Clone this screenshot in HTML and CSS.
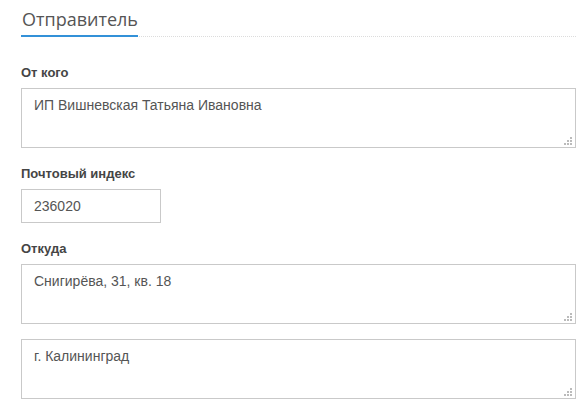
FILE: index.html
```html
<!DOCTYPE html>
<html lang="ru">
<head>
<meta charset="utf-8">
<title>Отправитель</title>
<link rel="stylesheet" href="styles.css">
</head>
<body>
<div class="page">
  <div class="section-head"><h2 class="section-title">Отправитель</h2></div>

  <div class="field first">
    <label class="label">От кого</label>
    <div class="area-wrap">
      <textarea class="area">ИП Вишневская Татьяна Ивановна</textarea>
      <span class="grip"></span>
    </div>
  </div>

  <div class="field">
    <label class="label">Почтовый индекс</label>
    <input class="input" type="text" value="236020">
  </div>

  <div class="field">
    <label class="label">Откуда</label>
    <div class="area-wrap">
      <textarea class="area">Снигирёва, 31, кв. 18</textarea>
      <span class="grip"></span>
    </div>
    <div class="area-wrap next">
      <textarea class="area">г. Калининград</textarea>
      <span class="grip"></span>
    </div>
  </div>
</div>
</body>
</html>
```

FILE: styles.css
```css
html, body {
  margin: 0;
  padding: 0;
  background: #fff;
}

.page {
  padding: 7px 12px 0 21px;
  font-family: Arial, "Liberation Sans", sans-serif;
}

.section-head {
  display: flex;
  border-bottom: 1px dotted #dcdcdc;
}

.section-title {
  margin: 0 0 -1px 0;
  padding: 0 0 4px 1px;
  font-family: "Open Sans", sans-serif;
  font-weight: 400;
  font-size: 18px;
  line-height: 24px;
  color: #555;
  border-bottom: 2px solid #3391d8;
}

.field {
  display: flex;
  flex-direction: column;
  align-items: flex-start;
  margin-top: 18px;
}

.field.first {
  margin-top: 28px;
}

.label {
  font-weight: 700;
  font-size: 13px;
  line-height: 15px;
  color: #454545;
  margin-bottom: 8px;
}

.area-wrap {
  position: relative;
  width: 555px;
  height: 60px;
}

.area-wrap.next {
  margin-top: 15px;
}

.area, .input {
  box-sizing: border-box;
  margin: 0;
  border: 1px solid #c9c9c9;
  border-radius: 0;
  padding: 6px 12px;
  font-family: Arial, "Liberation Sans", sans-serif;
  font-size: 14px;
  line-height: 20px;
  color: #555;
  background: #fff;
  outline: none;
}

.area {
  display: block;
  width: 100%;
  height: 100%;
  resize: none;
  overflow: hidden;
}

.input {
  width: 140px;
  height: 34px;
}

.grip {
  position: absolute;
  right: 4px;
  bottom: 3px;
  width: 8px;
  height: 8px;
  background:
    linear-gradient(#bbb, #bbb) 6px 0 / 2px 2px no-repeat,
    linear-gradient(#bbb, #bbb) 3px 3px / 2px 2px no-repeat,
    linear-gradient(#bbb, #bbb) 6px 3px / 2px 2px no-repeat,
    linear-gradient(#bbb, #bbb) 0 6px / 2px 2px no-repeat,
    linear-gradient(#bbb, #bbb) 3px 6px / 2px 2px no-repeat,
    linear-gradient(#bbb, #bbb) 6px 6px / 2px 2px no-repeat;
}
```
